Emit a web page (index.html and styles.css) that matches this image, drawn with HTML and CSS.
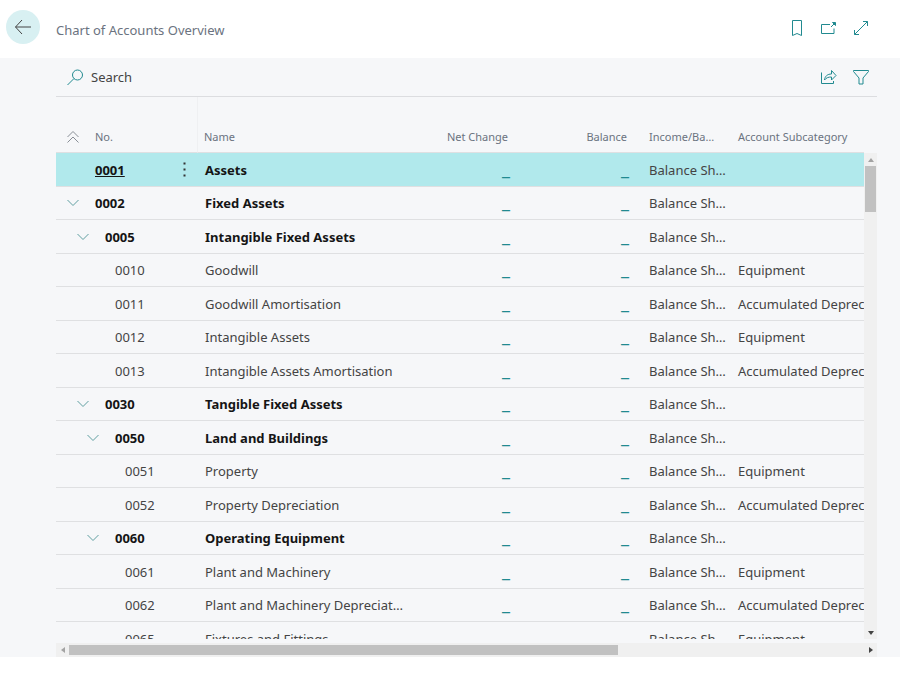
FILE: index.html
```html
<!DOCTYPE html>
<html lang="en">
<head>
<meta charset="utf-8">
<meta name="viewport" content="width=device-width, initial-scale=1">
<title>Chart of Accounts Overview</title>
<link rel="stylesheet" href="styles.css">
</head>
<body>
<svg class="defs" aria-hidden="true">
  <symbol id="chevron" viewBox="0 0 12 8"><path d="M.5 1 6 6.500 11.500 1" fill="none" stroke="currentColor"/></symbol>
</svg>

<header class="topbar">
  <button class="back" type="button" aria-label="Back">
    <svg width="18" height="16" viewBox="0 0 18 16"><path d="M8 1 1.500 8 8 15M1.500 8H17" /></svg>
  </button>
  <h1 class="title">Chart of Accounts Overview</h1>
  <div class="actions">
    <button class="icon" type="button" aria-label="Bookmark">
      <svg width="16" height="18" viewBox="0 0 16 18"><path d="M3.500 1.500h9v15L8 14.500l-4.500 2z"/></svg>
    </button>
    <button class="icon" type="button" aria-label="Open in new window">
      <svg width="16" height="18" viewBox="0 0 16 18"><path d="M9 5.500H.5v9h12.500V9.500M10 8l3.500-3.500"/><path class="solid" d="M11.500 3.500h3v3z"/></svg>
    </button>
    <button class="icon" type="button" aria-label="Expand">
      <svg width="16" height="18" viewBox="0 0 16 18"><path d="M1.500 15.500 14.500 2.500M10 2.500h4.500V7M1.500 11v4.500H6"/></svg>
    </button>
  </div>
</header>

<main class="page">
  <div class="toolbar">
    <button class="search" type="button">
      <svg width="17" height="17" viewBox="0 0 17 17"><circle cx="10.500" cy="6" r="5"/><path d="M7 9.500.5 16"/></svg>
      <span>Search</span>
    </button>
    <div class="actions">
      <button class="icon" type="button" aria-label="Share">
        <svg width="16" height="18" viewBox="0 0 16 18"><path d="M.5 4.500v11h12V13M3.500 12c.5-4 3-6 7-6V2.500l4.500 5-4.500 4.500V9C7.500 9 5.500 9.500 3.500 12z"/></svg>
      </button>
      <button class="icon" type="button" aria-label="Filter">
        <svg width="16" height="18" viewBox="0 0 16 18"><path d="M.5 2.500h15v1L10 10v6H6v-6L.5 3.500z"/></svg>
      </button>
    </div>
  </div>

  <div class="list">
    <div class="viewport">
      <table class="accounts">
        <colgroup><col class="c-no"><col class="c-menu"><col class="c-name"><col class="c-net"><col class="c-balance"><col class="c-income"><col class="c-sub"></colgroup>
        <thead>
          <tr>
            <th scope="col"><div class="node"><button class="toggle collapse" type="button" aria-label="Collapse all"><svg width="12" height="12" viewBox="0 0 12 12"><path d="M.5 6 6 .5 11.500 6M.5 11.500 6 6l5.500 5.500"/></svg></button>No.</div></th>
            <th></th><th scope="col">Name</th><th scope="col" class="num">Net Change</th><th scope="col" class="num">Balance</th><th scope="col">Income/Balance</th><th scope="col">Account Subcategory</th>
          </tr>
        </thead>
        <tbody>
          <tr class="group selected"><td><div class="node"><span class="toggle"></span><a class="current" href="#">0001</a></div></td><td><button class="more" type="button" aria-label="More options"><svg width="3" height="15" viewBox="0 0 3 15"><path d="M.5.5h2v2h-2zM.5 6.500h2v2h-2zM.5 12.500h2v2h-2z"/></svg></button></td><td>Assets</td><td class="num"><a href="#">_</a></td><td class="num"><a href="#">_</a></td><td>Balance Sheet</td><td></td></tr>
          <tr class="group"><td><div class="node"><button class="toggle" type="button" aria-label="Collapse 0002"><svg width="12" height="8"><use href="#chevron"/></svg></button>0002</div></td><td></td><td>Fixed Assets</td><td class="num"><a href="#">_</a></td><td class="num"><a href="#">_</a></td><td>Balance Sheet</td><td></td></tr>
          <tr class="group"><td><div class="node level-1"><button class="toggle" type="button" aria-label="Collapse 0005"><svg width="12" height="8"><use href="#chevron"/></svg></button>0005</div></td><td></td><td>Intangible Fixed Assets</td><td class="num"><a href="#">_</a></td><td class="num"><a href="#">_</a></td><td>Balance Sheet</td><td></td></tr>
          <tr><td><div class="node level-2"><span class="toggle"></span>0010</div></td><td></td><td>Goodwill</td><td class="num"><a href="#">_</a></td><td class="num"><a href="#">_</a></td><td>Balance Sheet</td><td>Equipment</td></tr>
          <tr><td><div class="node level-2"><span class="toggle"></span>0011</div></td><td></td><td>Goodwill Amortisation</td><td class="num"><a href="#">_</a></td><td class="num"><a href="#">_</a></td><td>Balance Sheet</td><td>Accumulated Depreciation</td></tr>
          <tr><td><div class="node level-2"><span class="toggle"></span>0012</div></td><td></td><td>Intangible Assets</td><td class="num"><a href="#">_</a></td><td class="num"><a href="#">_</a></td><td>Balance Sheet</td><td>Equipment</td></tr>
          <tr><td><div class="node level-2"><span class="toggle"></span>0013</div></td><td></td><td>Intangible Assets Amortisation</td><td class="num"><a href="#">_</a></td><td class="num"><a href="#">_</a></td><td>Balance Sheet</td><td>Accumulated Depreciation</td></tr>
          <tr class="group"><td><div class="node level-1"><button class="toggle" type="button" aria-label="Collapse 0030"><svg width="12" height="8"><use href="#chevron"/></svg></button>0030</div></td><td></td><td>Tangible Fixed Assets</td><td class="num"><a href="#">_</a></td><td class="num"><a href="#">_</a></td><td>Balance Sheet</td><td></td></tr>
          <tr class="group"><td><div class="node level-2"><button class="toggle" type="button" aria-label="Collapse 0050"><svg width="12" height="8"><use href="#chevron"/></svg></button>0050</div></td><td></td><td>Land and Buildings</td><td class="num"><a href="#">_</a></td><td class="num"><a href="#">_</a></td><td>Balance Sheet</td><td></td></tr>
          <tr><td><div class="node level-3"><span class="toggle"></span>0051</div></td><td></td><td>Property</td><td class="num"><a href="#">_</a></td><td class="num"><a href="#">_</a></td><td>Balance Sheet</td><td>Equipment</td></tr>
          <tr><td><div class="node level-3"><span class="toggle"></span>0052</div></td><td></td><td>Property Depreciation</td><td class="num"><a href="#">_</a></td><td class="num"><a href="#">_</a></td><td>Balance Sheet</td><td>Accumulated Depreciation</td></tr>
          <tr class="group"><td><div class="node level-2"><button class="toggle" type="button" aria-label="Collapse 0060"><svg width="12" height="8"><use href="#chevron"/></svg></button>0060</div></td><td></td><td>Operating Equipment</td><td class="num"><a href="#">_</a></td><td class="num"><a href="#">_</a></td><td>Balance Sheet</td><td></td></tr>
          <tr><td><div class="node level-3"><span class="toggle"></span>0061</div></td><td></td><td>Plant and Machinery</td><td class="num"><a href="#">_</a></td><td class="num"><a href="#">_</a></td><td>Balance Sheet</td><td>Equipment</td></tr>
          <tr><td><div class="node level-3"><span class="toggle"></span>0062</div></td><td></td><td>Plant and Machinery Depreciation</td><td class="num"><a href="#">_</a></td><td class="num"><a href="#">_</a></td><td>Balance Sheet</td><td>Accumulated Depreciation</td></tr>
          <tr><td><div class="node level-3"><span class="toggle"></span>0065</div></td><td></td><td>Fixtures and Fittings</td><td class="num"><a href="#">_</a></td><td class="num"><a href="#">_</a></td><td>Balance Sheet</td><td>Equipment</td></tr>
        </tbody>
      </table>
    </div>
    <div class="scroll vertical">
      <button type="button" class="dim" aria-label="Scroll up"><svg width="6" height="4" viewBox="0 0 6 4"><path d="M0 4 3 0l3 4z"/></svg></button>
      <div class="track"><div class="thumb"></div></div>
      <button type="button" aria-label="Scroll down"><svg width="6" height="4" viewBox="0 0 6 4"><path d="M0 0h6L3 4z"/></svg></button>
    </div>
    <div class="scroll horizontal">
      <button type="button" class="dim" aria-label="Scroll left"><svg width="4" height="6" viewBox="0 0 4 6"><path d="M4 0v6L0 3z"/></svg></button>
      <div class="track"><div class="thumb"></div></div>
      <button type="button" aria-label="Scroll right"><svg width="4" height="6" viewBox="0 0 4 6"><path d="M0 0v6l4-3z"/></svg></button>
    </div>
  </div>
</main>
</body>
</html>
```
FILE: styles.css
```css
* { box-sizing: border-box; }

body {
  margin: 0;
  height: 100vh;
  padding-bottom: 17px;
  display: flex;
  flex-direction: column;
  background: #fff;
  color: #444;
  font: 13px/18px "Noto Sans", "Open Sans", sans-serif;
}

button {
  margin: 0;
  padding: 0;
  border: 0;
  background: none;
  color: inherit;
  font: inherit;
  cursor: pointer;
}

svg { display: block; fill: none; stroke: currentColor; }
.solid { fill: currentColor; }
.defs { position: absolute; width: 0; height: 0; }

.topbar {
  flex: none;
  height: 58px;
  padding: 0 31px 4px 6px;
  display: flex;
  align-items: center;
}

.back {
  width: 34px;
  height: 34px;
  display: grid;
  place-items: center;
  border-radius: 50%;
  background: #d8f0f2;
}

.title {
  margin: 6px 0 0 16px;
  color: #6b7380;
  font-size: 13px;
  font-weight: 400;
}

.actions { margin-left: auto; display: flex; gap: 16px; color: #218a90; }
.topbar .actions { margin-top: 2px; }

.page {
  flex: 1;
  min-height: 0;
  padding: 0 23px 0 56px;
  display: flex;
  flex-direction: column;
  background: #f6f7f9;
}

.toolbar {
  flex: none;
  height: 39px;
  padding: 0 8px 0 11px;
  display: flex;
  align-items: center;
  border-bottom: 1px solid #dcdde0;
}

.search { display: flex; align-items: center; gap: 7px; }
.search svg { color: #218a90; }

.list {
  flex: 1;
  min-height: 0;
  display: grid;
  grid-template: minmax(0, 1fr) 14px / minmax(0, 1fr) 13px;
  row-gap: 4px;
}

.viewport { overflow: hidden; }

.accounts {
  width: 100%;
  table-layout: fixed;
  border-collapse: separate;
  border-spacing: 0;
}

.c-no { width: 114px; }
.c-menu { width: 28px; }
.c-name { width: 206px; }
.c-net { width: 114px; }
.c-balance { width: 119px; }
.c-income { width: 90px; }

th, td {
  padding: 0 0 0 7px;
  border-bottom: 1px solid #dfe0e2;
  overflow: hidden;
  text-align: left;
  text-overflow: ellipsis;
  white-space: nowrap;
}

th {
  height: 56px;
  padding: 25px 0 0 6px;
  color: #6b7380;
  font-size: 11px;
  font-weight: 400;
}

th:nth-child(2) { border-right: 1px solid #eff0f2; }
td { height: 33px; }
tbody tr:nth-child(odd) td { height: 34px; }
th:nth-child(1), td:nth-child(1) { padding-left: 0; }
th:nth-child(6), td:nth-child(6) { padding-left: 12px; }
th:nth-child(6) { padding-right: 11px; }
th:nth-child(7), td:nth-child(7) { padding-left: 11px; text-overflow: clip; }

.group td:nth-child(-n+3) { color: #151515; font-weight: 700; }
.selected td { background: #b1e9ec; }

th.num { padding-right: 10px; text-align: right; }
td.num { padding-right: 8px; text-align: right; }
.num a { color: #218a90; font-size: 18px; text-decoration: none; vertical-align: 2px; }

.node { display: flex; align-items: center; padding-left: 11px; }
.level-1 { padding-left: 21px; }
.level-2 { padding-left: 31px; }
.level-3 { padding-left: 41px; }
.toggle { width: 12px; margin-right: 16px; color: #5f9ea0; }
.collapse { color: #888e96; }
.current { color: inherit; text-decoration: underline; }

.more { display: block; margin-left: 6px; color: #333; }
.more svg { fill: currentColor; stroke: none; }

.scroll { display: flex; background: #f0f0f0; color: #444; }
.scroll button { flex: none; display: grid; place-items: center; }
.scroll svg { fill: currentColor; stroke: none; }
.scroll .dim { color: #a3a3a3; }
.scroll .track { flex: 1; }
.scroll .thumb { background: #c1c1c1; }

.vertical { flex-direction: column; margin-top: 56px; }
.vertical button { height: 13px; }
.vertical .track { padding: 0 1px; }
.vertical .thumb { height: 10%; }

.horizontal { grid-column: 1 / -1; }
.horizontal button { width: 13px; }
.horizontal .track { padding: 2px 0; }
.horizontal .thumb { width: 69%; height: 100%; }
```
